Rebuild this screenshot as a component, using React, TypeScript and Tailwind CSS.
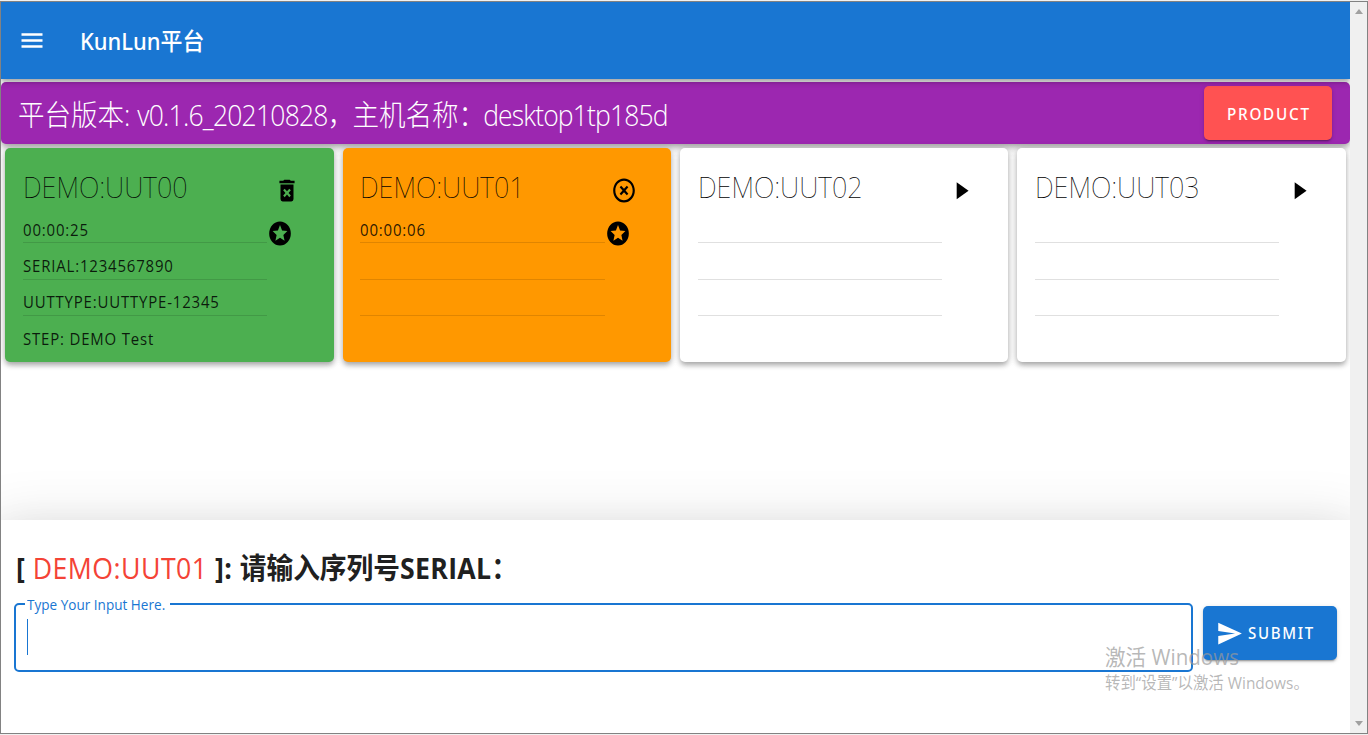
import React from "react";

const icons = {
  menu: "M3,6H21V8H3V6M3,11H21V13H3V11M3,16H21V18H3V16Z",
  trash:
    "M6,19A2,2 0 0,0 8,21H16A2,2 0 0,0 18,19V7H6V19M8.46,11.88L9.87,10.47L12,12.59L14.12,10.47L15.53,11.88L13.41,14L15.53,16.12L14.12,17.53L12,15.41L9.88,17.53L8.47,16.12L10.59,14L8.46,11.88M15.5,4L14.5,3H9.5L8.5,4H5V6H19V4H15.5Z",
  close:
    "M12,20C7.59,20 4,16.41 4,12C4,7.59 7.59,4 12,4C16.41,4 20,7.59 20,12C20,16.41 16.41,20 12,20M12,2C6.47,2 2,6.47 2,12C2,17.53 6.47,22 12,22C17.53,22 22,17.53 22,12C22,6.47 17.53,2 12,2M14.59,8L12,10.59L9.41,8L8,9.41L10.59,12L8,14.59L9.41,16L12,13.41L14.59,16L16,14.59L13.41,12L16,9.41L14.59,8Z",
  star: "M16.23,18L12,15.45L7.77,18L8.89,13.19L5.16,9.96L10.08,9.54L12,5L13.92,9.53L18.84,9.95L15.11,13.18L16.23,18M12,2C6.47,2 2,6.5 2,12A10,10 0 0,0 12,22A10,10 0 0,0 22,12A10,10 0 0,0 12,2Z",
  play: "M8,5.14V19.14L19,12.14L8,5.14Z",
  send: "M2,21L23,12L2,3V10L17,12L2,14V21Z",
};

function Icon({ name, className = "w-[26px]" }: { name: keyof typeof icons; className?: string }) {
  return (
    <svg
      viewBox="0 0 24 24"
      preserveAspectRatio="none"
      className={`h-[29px] shrink-0 fill-current ${className}`}
    >
      <path d={icons[name]} />
    </svg>
  );
}

type Unit = {
  name: string;
  color: string;
  action: "trash" | "close" | "play";
  starred: boolean;
  lines: string[];
};

const units: Unit[] = [
  {
    name: "DEMO:UUT00",
    color: "bg-[#4caf50]",
    action: "trash",
    starred: true,
    lines: ["00:00:25", "SERIAL:1234567890", "UUTTYPE:UUTTYPE-12345", "STEP: DEMO Test"],
  },
  { name: "DEMO:UUT01", color: "bg-[#ff9800]", action: "close", starred: true, lines: ["00:00:06", "", "", ""] },
  { name: "DEMO:UUT02", color: "bg-white", action: "play", starred: false, lines: ["", "", "", ""] },
  { name: "DEMO:UUT03", color: "bg-white", action: "play", starred: false, lines: ["", "", "", ""] },
];

function UnitCard({ unit }: { unit: Unit }) {
  return (
    <section
      className={`flex h-[214px] flex-col rounded-[5px] pl-[17.7px] text-black/85 shadow-[0_4px_5px_-1px_rgba(0,0,0,.2),0_2px_6px_0_rgba(0,0,0,.14),0_1px_10px_0_rgba(0,0,0,.12)] ${unit.color}`}
    >
      <header className="flex h-[66px] items-start justify-between pr-[34px]">
        <h2 className="mt-[19px] origin-left scale-x-[0.927] whitespace-nowrap font-['Noto_Sans',sans-serif] text-[29px] leading-[40px] font-thin text-black">
          {unit.name}
        </h2>
        <Icon name={unit.action} className="mt-[27.5px] w-[26px] text-black" />
      </header>
      <div className="flex">
        <div className="w-[244.5px] text-[16px] leading-[22px]">
          {unit.lines.map((line, i) => (
            <div
              key={i}
              className={`flex items-end ${i === 0 ? "h-[29px] pb-px" : i === 3 ? "h-[36px] pb-[2px]" : "h-[36.7px] pb-[2px]"} ${i < 3 ? "border-b border-black/12" : ""}`}
            >
              <span className="origin-left scale-x-[0.935] whitespace-nowrap tracking-[0.88px]">{line || "\u00a0"}</span>
            </div>
          ))}
        </div>
        {unit.starred && <Icon name="star" className="mt-[5px] w-[26px] text-black" />}
      </div>
    </section>
  );
}

export default function App() {
  return (
    <div className="h-[735px] w-[1368px] overflow-hidden bg-[#f0f0f0] pt-px pb-px font-['Open_Sans','Noto_Sans_CJK_SC',sans-serif]">
      <div className="relative flex h-[733px] border border-[#828282] bg-white">
        <div className="flex w-[1349px] shrink-0 flex-col overflow-hidden">
          <header className="relative z-10 flex h-[77px] shrink-0 items-center bg-[#1976d2] pl-[16.5px] text-white shadow-[0_2px_4px_-1px_rgba(0,0,0,.2),0_4px_5px_0_rgba(0,0,0,.14),0_1px_10px_0_rgba(0,0,0,.12)]">
            <Icon name="menu" className="w-[28px]" />
            <h1 className="ml-[34.5px] origin-left scale-x-[0.914] font-['Noto_Sans','Noto_Sans_CJK_SC',sans-serif] text-[24px] leading-[32px] font-medium whitespace-nowrap">
              KunLun平台
            </h1>
          </header>

          <div className="mt-[3px] flex h-[62px] shrink-0 items-center justify-between rounded-[5px] bg-[#9c27b0] pr-[18px] pl-[17px] text-white shadow-[0_3px_5px_-1px_rgba(0,0,0,.2),0_5px_8px_0_rgba(0,0,0,.14),0_1px_10px_0_rgba(0,0,0,.12)]">
            <p className="mt-[3px] origin-left scale-x-[0.914] text-[29px] leading-[40px] font-light whitespace-nowrap">
              平台版本<span>: </span>
              <span className="tracking-[-0.85px]">v0.1.6_20210828</span>
              <span className="tracking-[-2px]">，</span>主机名称<span className="tracking-[-2px]">：</span>
              <span className="tracking-[-0.95px]">desktop1tp185d</span>
            </p>
            <button className="flex h-[54px] w-[128px] items-center justify-center rounded-[5px] bg-[#ff5252] shadow-[0_3px_1px_-2px_rgba(0,0,0,.2),0_2px_2px_0_rgba(0,0,0,.14),0_1px_5px_0_rgba(0,0,0,.12)]">
              <span className="mt-px ml-px scale-x-[0.955] font-['Noto_Sans',sans-serif] text-[16px] font-medium tracking-[1.8px]">
                PRODUCT
              </span>
            </button>
          </div>

          <main className="grid h-[376px] shrink-0 grid-cols-4 content-start gap-x-[8.7px] px-[4.3px] pt-[4px]">
            {units.map((unit) => (
              <UnitCard key={unit.name} unit={unit} />
            ))}
          </main>

          <footer className="relative flex-1 bg-white px-[13px] pt-[27px] shadow-[0_12px_17px_-8px_rgba(0,0,0,.2),0_28px_44px_3px_rgba(0,0,0,.14),0_10px_53px_9px_rgba(0,0,0,.12)]">
            <h2 className="mt-px ml-[1.5px] block h-[39px] w-max origin-left scale-x-[0.921] text-[29px] leading-[40px] font-bold whitespace-nowrap text-[#202020]">
              <span className="tracking-[0.5px]">
                [ <span className="font-normal text-[#f44336]">DEMO:UUT01</span> ]:{" "}
              </span>
              请输入序列号<span className="tracking-[0.3px]">SERIAL</span>：
            </h2>
            <div className="mt-[17px] flex items-start">
              <fieldset className="-mt-[7px] h-[75px] w-[1179px] rounded-[5px] border-2 border-[#1976d2] px-[9px]">
                <legend className="h-[14px] w-[145px] pl-[2px]">
                  <span className="-mt-[2px] block w-max origin-left scale-x-[0.935] text-[14.5px] leading-[20px] whitespace-nowrap text-[#1976d2]">
                    Type Your Input Here.
                  </span>
                </legend>
                <div className="mt-[8px] ml-[2px] h-[36px] w-px bg-[#1976d2]" />
              </fieldset>
              <button className="mt-[2px] ml-[10px] flex h-[54px] w-[134px] items-center rounded-[5px] bg-[#1976d2] pl-[13px] text-white shadow-[0_3px_1px_-2px_rgba(0,0,0,.2),0_2px_2px_0_rgba(0,0,0,.14),0_1px_5px_0_rgba(0,0,0,.12)]">
                <Icon name="send" className="w-[27px]" />
                <span className="ml-[5px] origin-left scale-x-[0.94] font-['Noto_Sans',sans-serif] text-[16px] font-medium tracking-[1.8px]">
                  SUBMIT
                </span>
              </button>
            </div>
          </footer>
        </div>

        <div className="flex w-[17px] shrink-0 flex-col items-center justify-between bg-[#f0f0f0] pt-[7px] pb-[7px] text-[#a0a0a0]">
          <svg viewBox="0 0 8 5" className="h-[5px] w-[8px] fill-current">
            <path d="M0 5L4 0L8 5Z" />
          </svg>
          <svg viewBox="0 0 8 5" className="h-[5px] w-[8px] fill-current">
            <path d="M0 0L4 5L8 0Z" />
          </svg>
        </div>

        <div className="pointer-events-none absolute top-[640px] left-[1104px] whitespace-nowrap text-[#999]/70">
          <div className="w-max origin-left scale-x-[0.935] text-[22px] leading-[28px]">激活 Windows</div>
          <div className="w-max origin-left scale-x-[0.935] text-[16.5px] leading-[26px]">转到“设置”以激活 Windows。</div>
        </div>
      </div>
    </div>
  );
}
